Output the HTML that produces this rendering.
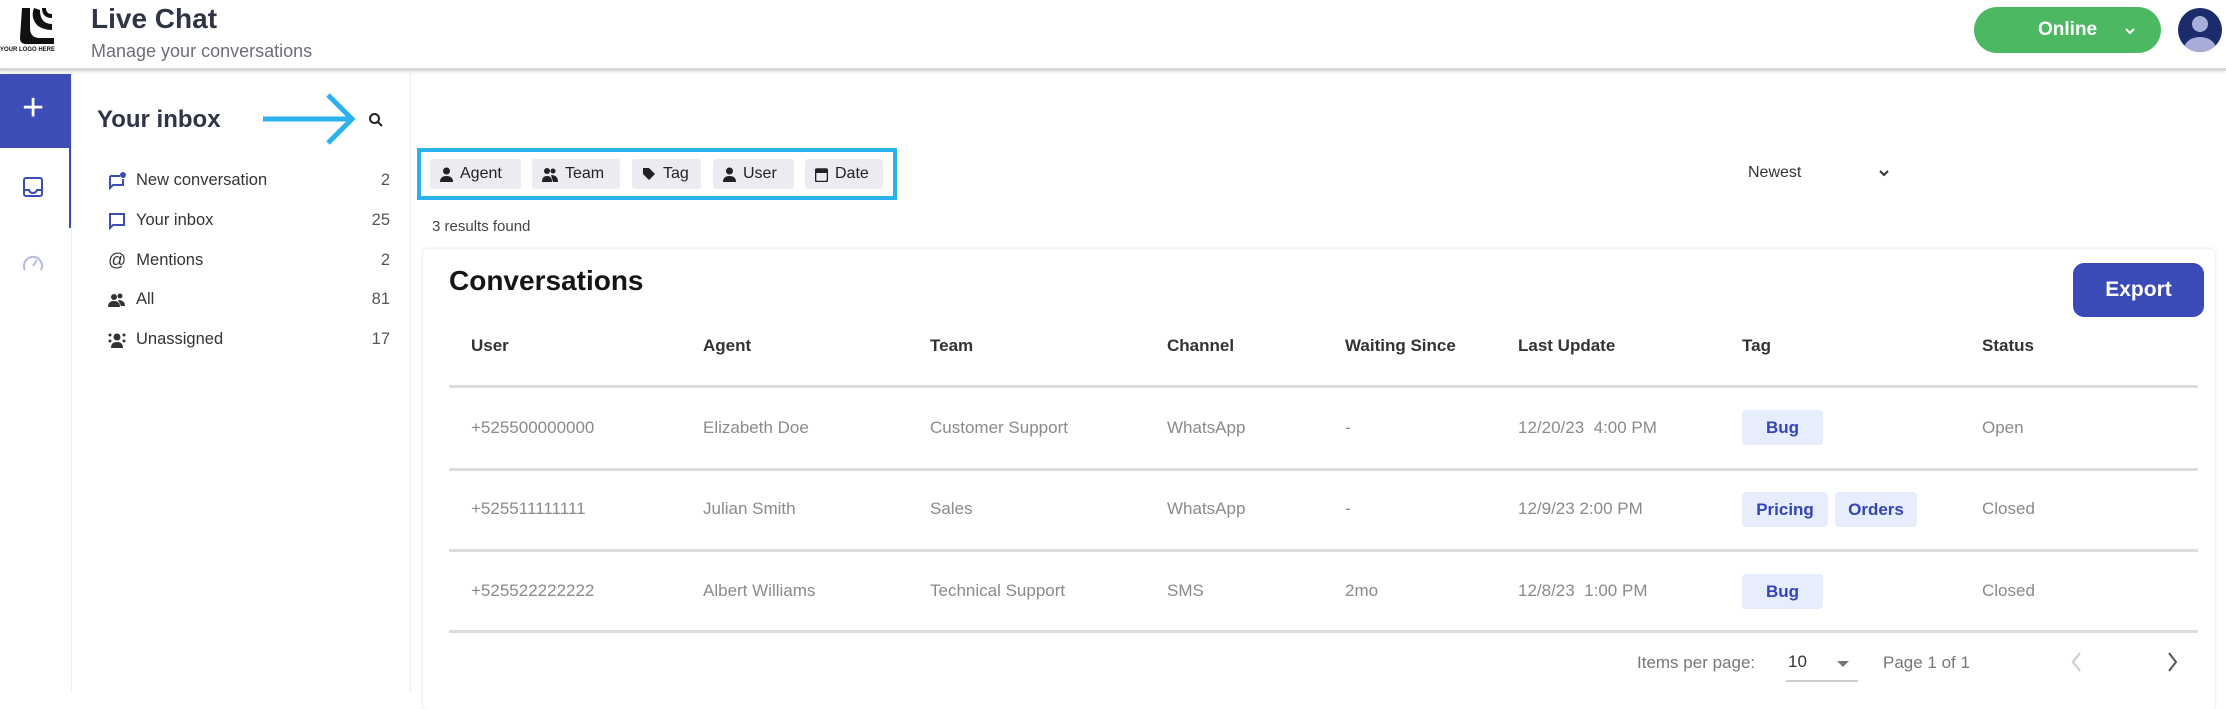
<!DOCTYPE html>
<html><head><meta charset="utf-8"><style>
*{margin:0;padding:0;box-sizing:border-box}
body{width:2226px;height:692px;overflow:hidden;background:#fff;font-family:"Liberation Sans",sans-serif;position:relative;color:#2d3142}
.a{position:absolute;white-space:nowrap}
.hdr{left:0;top:0;width:2226px;height:71px;border-bottom:3px solid #d6d8dc;box-shadow:0 2px 3px rgba(0,0,0,.08)}
.chip{position:absolute;top:159px;height:30px;background:#ebebf1;border-radius:3px;font-size:16px;color:#222;display:flex;align-items:center;padding-left:10px;gap:7px}
.mi{position:absolute;left:108px;font-size:16.5px;color:#333;width:282px;display:flex;align-items:center}
.mi span.c{margin-left:auto;color:#555}
.mi svg{margin-right:10px}
.th{position:absolute;top:336px;font-size:17px;font-weight:bold;color:#333}
.td{position:absolute;font-size:17px;color:#8a8a8a}
.ln{position:absolute;left:449px;width:1749px;height:3px;background:#dcdcdc}
.tag{position:absolute;height:35px;background:#e6edfc;color:#3344b8;font-weight:bold;font-size:17px;border-radius:4px;display:flex;align-items:center;justify-content:center}
</style></head><body>
<div class="a hdr"></div>
<svg class="a" style="left:14px;top:6px" width="44" height="40" viewBox="0 0 44 40"><path d="M8 2 h8 v20 q0 10 10 10 h14 v6 H12 q-6 0 -6 -6 Z" fill="#111"/><path d="M20 2 q-4 10 4 18 q6 4 14 4 v-6 q-12 0 -12 -14 Z" fill="#111"/><path d="M28 2 q0 10 10 10 v-4 q-6 0 -6 -6Z" fill="#111"/></svg>
<div class="a" style="left:0;top:47px;font-size:6px;font-weight:bold;color:#111">YOUR LOGO HERE</div>
<div class="a" style="left:91px;top:3px;font-size:28px;font-weight:bold;color:#2f3446">Live Chat</div>
<div class="a" style="left:91px;top:41px;font-size:18px;color:#6b6e78">Manage your conversations</div>
<div class="a" style="left:1974px;top:7px;width:187px;height:46px;border-radius:23px;background:#4cb962"></div>
<div class="a" style="left:2038px;top:19px;font-size:19px;font-weight:bold;color:#fff">Online</div>
<svg class="a" style="left:2124px;top:26px" width="12" height="10"><path d="M2 3 L6 7 L10 3" stroke="#fff" stroke-width="2" fill="none"/></svg>
<svg class="a" style="left:2177px;top:7px" width="46" height="46" viewBox="0 0 46 46"><defs><clipPath id="c"><circle cx="23" cy="23" r="22"/></clipPath></defs><circle cx="23" cy="23" r="22" fill="#1b2b6b"/><g clip-path="url(#c)" fill="#a7acd9"><circle cx="23" cy="17" r="8"/><ellipse cx="23" cy="42" rx="16" ry="12"/></g></svg>
<div class="a" style="left:0;top:74px;width:71px;height:74px;background:#3d4db7"></div>
<div class="a" style="left:22px;top:88px;font-size:38px;color:#fff;line-height:40px">+</div>
<div class="a" style="left:69px;top:148px;width:2px;height:80px;background:#3d4db7"></div>
<div class="a" style="left:71px;top:74px;width:1px;height:618px;background:#eee"></div>
<svg class="a" style="left:22px;top:176px" width="22" height="22" viewBox="0 0 22 22"><rect x="2" y="2" width="18" height="18" rx="2" fill="none" stroke="#3d4db7" stroke-width="2"/><path d="M2 14 h5 q1 3 4 3 q3 0 4 -3 h5" fill="none" stroke="#3d4db7" stroke-width="2"/></svg>
<svg class="a" style="left:22px;top:253px" width="22" height="20" viewBox="0 0 22 20"><path d="M3 17 A9 9 0 1 1 19 17" fill="none" stroke="#b5b9de" stroke-width="2"/><path d="M11 13 L15 7" stroke="#b5b9de" stroke-width="2"/></svg>
<div class="a" style="left:410px;top:74px;width:1px;height:618px;background:#eee"></div>
<div class="a" style="left:97px;top:106px;font-size:24px;font-weight:bold;color:#2f3446">Your inbox</div>
<svg class="a" style="left:262px;top:92px" width="96" height="54" viewBox="0 0 96 54"><path d="M1 27 H90 M66 3 L90 27 L66 51" stroke="#2bb2ee" stroke-width="5" fill="none"/></svg>
<svg class="a" style="left:368px;top:112px" width="16" height="16" viewBox="0 0 16 16"><circle cx="6.5" cy="6.5" r="4.5" fill="none" stroke="#222" stroke-width="2"/><path d="M10 10 L14 14" stroke="#222" stroke-width="2"/></svg>
<div class="mi" style="top:171px"><svg width="18" height="18"><path d="M2 4 h10 M2 4 v12 l3-3 h10 v-6" fill="none" stroke="#3d4db7" stroke-width="2"/><circle cx="15" cy="3" r="3" fill="#3d4db7"/></svg>New conversation<span class="c">2</span></div>
<div class="mi" style="top:211px"><svg width="18" height="18"><path d="M2 2 h14 v11 H5 l-3 3Z" fill="none" stroke="#3d4db7" stroke-width="2"/></svg>Your inbox<span class="c">25</span></div>
<div class="mi" style="top:250px"><span style="margin-right:10px;font-size:18px">@</span>Mentions<span class="c">2</span></div>
<div class="mi" style="top:290px"><svg width="18" height="18"><circle cx="6" cy="6" r="3" fill="#333"/><circle cx="12" cy="5" r="2.5" fill="#333"/><path d="M0 16 q0-6 6-6 q6 0 6 6Z M10 9 q7 0 7 6 h-4Z" fill="#333"/></svg>All<span class="c">81</span></div>
<div class="mi" style="top:330px"><svg width="18" height="18"><circle cx="9" cy="6" r="3.5" fill="#333"/><path d="M3 17 q0-6 6-6 q6 0 6 6Z" fill="#333"/><circle cx="2" cy="4" r="1.5" fill="#333"/><circle cx="16" cy="4" r="1.5" fill="#333"/><circle cx="2" cy="10" r="1.5" fill="#333"/><circle cx="16" cy="10" r="1.5" fill="#333"/></svg>Unassigned<span class="c">17</span></div>
<div class="a" style="left:417px;top:148px;width:480px;height:52px;border:4px solid #2bb2ee"></div>
<div class="chip" style="left:430px;width:91px"><svg width="13" height="15"><circle cx="6.5" cy="4" r="3.5" fill="#222"/><path d="M0 15 q0-6 6.5-6 q6.5 0 6.5 6Z" fill="#222"/></svg>Agent</div>
<div class="chip" style="left:532px;width:88px"><svg width="16" height="15"><circle cx="5" cy="4" r="3" fill="#222"/><circle cx="11" cy="4" r="2.5" fill="#222"/><path d="M0 15 q0-6 5-6 q5 0 5 6Z M9 8 q7 0 7 7 h-5Z" fill="#222"/></svg>Team</div>
<div class="chip" style="left:632px;width:69px"><svg width="14" height="14"><path d="M1 1 h6 l6 6 -6 6 -6-6Z" fill="#222"/></svg>Tag</div>
<div class="chip" style="left:713px;width:81px"><svg width="13" height="15"><circle cx="6.5" cy="4" r="3.5" fill="#222"/><path d="M0 15 q0-6 6.5-6 q6.5 0 6.5 6Z" fill="#222"/></svg>User</div>
<div class="chip" style="left:805px;width:78px"><svg width="13" height="15"><rect x="0.5" y="2" width="12" height="12.5" rx="1.5" fill="none" stroke="#222" stroke-width="1.6"/><rect x="0.5" y="2" width="12" height="4" fill="#222"/></svg>Date</div>
<div class="a" style="left:432px;top:218px;font-size:15px;color:#444">3 results found</div>
<div class="a" style="left:1748px;top:164px;font-size:16px;color:#333">Newest</div>
<svg class="a" style="left:1878px;top:168px" width="12" height="10"><path d="M2 3 L6 7 L10 3" stroke="#333" stroke-width="2" fill="none"/></svg>
<div class="a" style="left:423px;top:249px;width:1792px;height:460px;border-radius:4px;box-shadow:0 0 3px rgba(0,0,0,.15);background:#fff"></div>
<div class="a" style="left:449px;top:265px;font-size:28px;font-weight:bold;color:#151515">Conversations</div>
<div class="a" style="left:2073px;top:263px;width:131px;height:54px;border-radius:11px;background:#3a4bb8;color:#fff;font-size:21px;font-weight:bold;display:flex;align-items:center;justify-content:center">Export</div>
<div class="th" style="left:471px">User</div><div class="th" style="left:703px">Agent</div><div class="th" style="left:930px">Team</div><div class="th" style="left:1167px">Channel</div><div class="th" style="left:1345px">Waiting Since</div><div class="th" style="left:1518px">Last Update</div><div class="th" style="left:1742px">Tag</div><div class="th" style="left:1982px">Status</div>
<div class="ln" style="top:385px"></div><div class="ln" style="top:468px"></div><div class="ln" style="top:549px"></div><div class="ln" style="top:630px"></div>
<div class="td" style="top:418px;left:471px">+525500000000</div><div class="td" style="top:418px;left:703px">Elizabeth Doe</div><div class="td" style="top:418px;left:930px">Customer Support</div><div class="td" style="top:418px;left:1167px">WhatsApp</div><div class="td" style="top:418px;left:1345px">-</div><div class="td" style="top:418px;left:1518px">12/20/23&nbsp; 4:00 PM</div><div class="td" style="top:418px;left:1982px">Open</div>
<div class="tag" style="left:1742px;top:410px;width:81px">Bug</div>
<div class="td" style="top:499px;left:471px">+525511111111</div><div class="td" style="top:499px;left:703px">Julian Smith</div><div class="td" style="top:499px;left:930px">Sales</div><div class="td" style="top:499px;left:1167px">WhatsApp</div><div class="td" style="top:499px;left:1345px">-</div><div class="td" style="top:499px;left:1518px">12/9/23 2:00 PM</div><div class="td" style="top:499px;left:1982px">Closed</div>
<div class="tag" style="left:1742px;top:492px;width:86px">Pricing</div><div class="tag" style="left:1835px;top:492px;width:82px">Orders</div>
<div class="td" style="top:581px;left:471px">+525522222222</div><div class="td" style="top:581px;left:703px">Albert Williams</div><div class="td" style="top:581px;left:930px">Technical Support</div><div class="td" style="top:581px;left:1167px">SMS</div><div class="td" style="top:581px;left:1345px">2mo</div><div class="td" style="top:581px;left:1518px">12/8/23&nbsp; 1:00 PM</div><div class="td" style="top:581px;left:1982px">Closed</div>
<div class="tag" style="left:1742px;top:574px;width:81px">Bug</div>
<div class="td" style="top:653px;left:1637px;color:#777">Items per page:</div>
<div class="td" style="top:652px;left:1788px;color:#333">10</div>
<svg class="a" style="left:1836px;top:660px" width="14" height="8"><path d="M1 1 L7 7 L13 1Z" fill="#777"/></svg>
<div class="a" style="left:1786px;top:680px;width:72px;height:2px;background:#ccc"></div>
<div class="td" style="top:653px;left:1883px;color:#777">Page 1 of 1</div>
<svg class="a" style="left:2070px;top:651px" width="12" height="22"><path d="M10 2 L3 11 L10 20" stroke="#ccc" stroke-width="2" fill="none"/></svg>
<svg class="a" style="left:2167px;top:651px" width="12" height="22"><path d="M2 2 L9 11 L2 20" stroke="#555" stroke-width="2" fill="none"/></svg>
</body></html>
